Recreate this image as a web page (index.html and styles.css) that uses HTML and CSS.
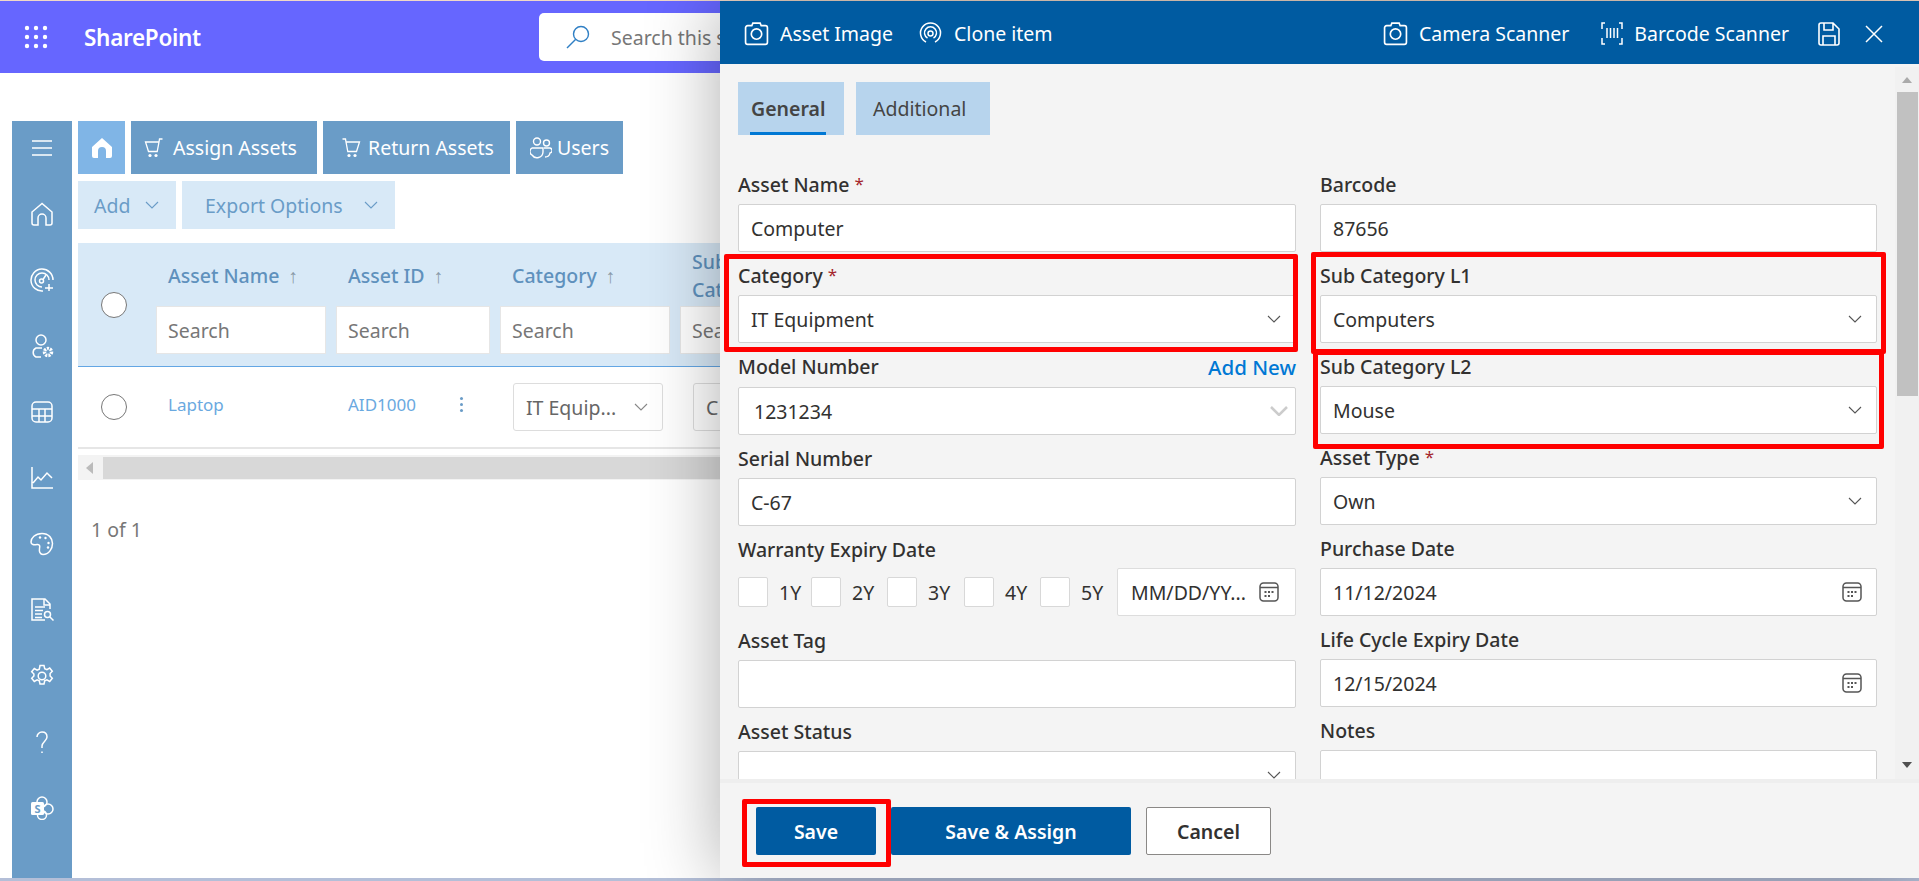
FILE: index.html
```html
<!DOCTYPE html>
<html lang="en">
<head>
  <meta charset="UTF-8">
  <title>SharePoint - Asset Management</title>
  <link rel="stylesheet" href="styles.css">
</head>
<body>
  <svg class="defs" width="0" height="0">
    <symbol id="chev" viewBox="0 0 14 8"><path d="M1 1l6 6 6-6" fill="none" stroke="currentColor" stroke-width="1.1"/></symbol>
    <symbol id="cal" viewBox="0 0 20 20">
      <rect x="1" y="1" width="18" height="18" rx="3.5" fill="none" stroke="currentColor" stroke-width="1.5"/>
      <path d="M1 5.5h18" stroke="currentColor" stroke-width="1.5"/>
      <path d="M5.5 9h2v2h-2zM9 9h2v2H9zM12.5 9h2v2h-2zM5.5 13h2v2h-2zM9 13h2v2H9z" fill="currentColor"/>
    </symbol>
    <symbol id="cam" viewBox="0 0 24 24">
      <path d="M3.5 4.5h4l1-2.5h7l1 2.5h4a2 2 0 0 1 2 2v14a2 2 0 0 1-2 2h-17a2 2 0 0 1-2-2v-14a2 2 0 0 1 2-2z" fill="none" stroke="currentColor" stroke-width="1.6"/>
      <circle cx="12" cy="12.5" r="5" fill="none" stroke="currentColor" stroke-width="1.6"/>
    </symbol>
    <symbol id="cart" viewBox="0 0 20 20">
      <path d="M1.500 4h13.500l-1.800 9.500H4.500zM15 4l.5-3h3" fill="none" stroke="currentColor" stroke-width="1.300"/>
      <circle cx="6" cy="17.500" r="1.600" fill="currentColor"/><circle cx="12" cy="17.500" r="1.600" fill="currentColor"/>
    </symbol>
  </svg>

  <div class="top-line"></div>
  <header class="topbar">
    <svg class="waffle" width="24" height="24" viewBox="0 0 24 24" fill="#fff">
      <circle cx="3" cy="3" r="2.2"/><circle cx="12" cy="3" r="2.2"/><circle cx="21" cy="3" r="2.2"/>
      <circle cx="3" cy="12" r="2.2"/><circle cx="12" cy="12" r="2.2"/><circle cx="21" cy="12" r="2.2"/>
      <circle cx="3" cy="21" r="2.2"/><circle cx="12" cy="21" r="2.2"/><circle cx="21" cy="21" r="2.2"/>
    </svg>
    <span class="brand">SharePoint</span>
    <div class="site-search">
      <svg width="24" height="24" viewBox="0 0 24 24" fill="none" stroke="#2f7fc4" stroke-width="1.4"><circle cx="15" cy="9" r="7.5"/><path d="M9.5 14.5L1 23"/></svg>
      <span>Search this site</span>
    </div>
  </header>

  <div class="app">
    <nav class="sidebar">
      <svg viewBox="0 0 24 24"><path d="M2 5h20M2 12h20M2 19h20"/></svg>
      <svg viewBox="0 0 24 24"><path d="M12 1.5L2 10v11a2 2 0 0 0 2 2h4v-7a4 4 0 0 1 8 0v7h4a2 2 0 0 0 2-2V10z"/></svg>
      <svg viewBox="0 0 24 24"><path d="M13 23A11 11 0 1 1 23 12M12 19a7 7 0 1 1 7-7"/><circle cx="11.500" cy="13" r="2"/><path d="M13 11.500l3-4.500M15 20h8M19 16v7"/></svg>
      <svg viewBox="0 0 24 24"><circle cx="11" cy="6" r="5"/><path d="M11 23H6a5 5 0 0 1 0-9h6"/><circle cx="18" cy="18" r="3.500" stroke-width="3.500" stroke-dasharray="2 1"/></svg>
      <svg viewBox="0 0 24 24"><rect x="2" y="2" width="20" height="20" rx="4"/><path d="M2 9h20M2 16h20M9 9v13M15 9v13"/></svg>
      <svg viewBox="0 0 24 24"><path d="M2 1v21h21M3 17l5-6 3 3 6-7 5 5"/></svg>
      <svg viewBox="0 0 24 24"><path d="M12 1.500C5 1.500 1 6 1 10c0 3 3 3 6 2.500 3-.5 3 2 2.500 4-.5 3 .5 6 3.500 6 6 0 9.500-6 9.500-11S19 1.500 12 1.500z"/><g class="solid"><circle cx="10" cy="5.500" r="1.200"/><circle cx="15.500" cy="6" r="1.200"/><circle cx="18.500" cy="11" r="1.200"/><circle cx="18" cy="15.500" r="1.200"/></g></svg>
      <svg viewBox="0 0 24 24"><path d="M20 11V6l-5-5H2v21h13M14 1v6h6M5 9h10M5 12.500h8M5 16h7M5 19.500h7"/><circle cx="17.500" cy="16.500" r="3"/><path d="M20 19l3.500 3.500"/></svg>
      <svg viewBox="0 0 24 24"><circle cx="12" cy="12" r="3.800"/><path d="M10 1.500h4l.7 3.200 2.200 1 2.800-1.700 2.600 3.300-2.200 2.200v2.500l2.200 2.200-2.600 3.300-2.800-1.700-2.200 1-.7 3.200h-4l-.7-3.200-2.200-1-2.800 1.700-2.600-3.300 2.200-2.200V10L1.700 7.800l2.600-3.300 2.800 1.700 2.200-1z"/></svg>
      <svg viewBox="0 0 24 24"><path d="M7 7a5 5 0 0 1 5-5c3 0 5 2 5 5 0 4-5 5-5 9v2"/><path d="M12 21.500v1.500"/></svg>
      <svg viewBox="0 0 24 24"><circle cx="12" cy="6" r="5"/><circle cx="18" cy="13" r="5"/><circle cx="12" cy="19" r="4.500"/><rect class="solid" x="1" y="6" width="13" height="13" rx="1.500"/><text class="sp-s" x="7.500" y="16.500" text-anchor="middle">S</text></svg>
    </nav>

    <main class="main">
      <div class="tabs">
        <a class="tab tab-home"><svg width="20" height="20" viewBox="0 0 20 20" fill="#fff"><path d="M10 0L0 9v9a2 2 0 0 0 2 2h4v-7a4 4 0 0 1 8 0v7h4a2 2 0 0 0 2-2V9z"/></svg></a>
        <a class="tab tab-assign"><svg width="20" height="20"><use href="#cart"/></svg>Assign Assets</a>
        <a class="tab tab-return"><svg class="flip" width="20" height="20"><use href="#cart"/></svg>Return Assets</a>
        <a class="tab tab-users">
          <svg width="22" height="22" viewBox="0 0 22 22" fill="none" stroke="currentColor" stroke-width="1.400"><circle cx="7" cy="4.500" r="3.500"/><circle cx="16.500" cy="6" r="3"/><path d="M2 11h11v4a6 6 0 0 1-11 3 4 4 0 0 1 0-7zM14 11h5a2.500 2.500 0 0 1 1 5c-.5 3-3 4-5 4"/></svg>
          Users
        </a>
      </div>

      <div class="actions">
        <a class="action action-add">Add<svg width="14" height="8"><use href="#chev"/></svg></a>
        <a class="action action-export">Export Options<svg width="14" height="8"><use href="#chev"/></svg></a>
      </div>

      <div class="grid-head">
        <div class="cell-check"><span class="radio"></span></div>
        <div class="col col-1"><div class="col-title">Asset Name <i>↑</i></div><div class="col-search">Search</div></div>
        <div class="col col-2"><div class="col-title">Asset ID <i>↑</i></div><div class="col-search">Search</div></div>
        <div class="col col-3"><div class="col-title">Category <i>↑</i></div><div class="col-search">Search</div></div>
        <div class="col col-4"><div class="col-title">Sub<br>Cat</div><div class="col-search">Sea</div></div>
      </div>

      <div class="grid-row">
        <div class="cell-check"><span class="radio"></span></div>
        <div class="cell col-1 cell-link">Laptop</div>
        <div class="cell col-2 cell-link cell-id">AID1000<span class="dots"></span></div>
        <div class="cell col-3"><div class="cell-select">IT Equip...<svg width="14" height="8"><use href="#chev"/></svg></div></div>
        <div class="cell col-4"><div class="cell-select">C</div></div>
      </div>

      <div class="hscroll"><span class="hscroll-btn"></span><span class="hscroll-thumb"></span></div>
      <div class="pager">1 of 1</div>
    </main>
  </div>
  <div class="bottom-line"></div>

  <aside class="panel">
    <div class="panel-head">
      <a class="head-btn"><svg width="25" height="25"><use href="#cam"/></svg>Asset Image</a>
      <a class="head-btn">
        <svg width="25" height="25" viewBox="0 0 25 25" fill="none" stroke="currentColor" stroke-width="1.500"><circle cx="12.500" cy="12.500" r="2.500"/><path d="M8 21a10 10 0 1 1 9 0M9.500 17a6 6 0 1 1 6 0"/></svg>
        Clone item
      </a>
      <span class="head-space"></span>
      <a class="head-btn head-btn-camera"><svg width="25" height="25"><use href="#cam"/></svg>Camera Scanner</a>
      <a class="head-btn">
        <svg width="22" height="25" viewBox="0 0 22 25" fill="none" stroke="currentColor" stroke-width="1.500"><path d="M4 2H1v6M1 17v6h3M18 2h3v6M21 17v6h-3M6 7v10M9.500 7v10M13 7v10M16.500 7v10"/></svg>
        Barcode Scanner
      </a>
      <svg class="head-save" width="22" height="24" viewBox="0 0 22 24" fill="none" stroke="#fff" stroke-width="1.600"><path d="M1 3a2 2 0 0 1 2-2h12l6 6v14a2 2 0 0 1-2 2H3a2 2 0 0 1-2-2zM6 1v7h9V1M5 23v-9h12v9"/></svg>
      <svg class="head-close" width="18" height="18" viewBox="0 0 18 18" stroke="#fff" stroke-width="1.500"><path d="M1 1l16 16M17 1L1 17"/></svg>
    </div>

    <div class="panel-body">
      <div class="panel-scroll">
        <div class="form-tabs">
          <a class="form-tab form-tab-general">General</a>
          <a class="form-tab form-tab-additional">Additional</a>
        </div>
        <div class="form-cols">
          <div class="form-col">
            <div class="field"><label>Asset Name <b>*</b></label><div class="input">Computer</div></div>
            <div class="field"><label>Category <b>*</b></label><div class="input">IT Equipment<svg width="14" height="8"><use href="#chev"/></svg></div></div>
            <div class="field field-model"><label>Model Number<a class="add-new">Add New</a></label><div class="input input-model">1231234<svg class="chev-bold" width="18" height="10" viewBox="0 0 18 10"><path d="M1 1l8 8 8-8" fill="none" stroke="currentColor" stroke-width="2.500"/></svg></div></div>
            <div class="field"><label>Serial Number</label><div class="input">C-67</div></div>
            <div class="field">
              <label>Warranty Expiry Date</label>
              <div class="warranty">
                <span class="tick"></span><span class="tick-label">1Y</span>
                <span class="tick"></span><span class="tick-label">2Y</span>
                <span class="tick"></span><span class="tick-label">3Y</span>
                <span class="tick"></span><span class="tick-label">4Y</span>
                <span class="tick"></span><span class="tick-label">5Y</span>
                <div class="input input-date">MM/DD/YY...<svg width="20" height="20"><use href="#cal"/></svg></div>
              </div>
            </div>
            <div class="field"><label>Asset Tag</label><div class="input"></div></div>
            <div class="field"><label>Asset Status</label><div class="input"><svg width="14" height="8"><use href="#chev"/></svg></div></div>
          </div>
          <div class="form-col">
            <div class="field"><label>Barcode</label><div class="input">87656</div></div>
            <div class="field"><label>Sub Category L1</label><div class="input">Computers<svg width="14" height="8"><use href="#chev"/></svg></div></div>
            <div class="field"><label>Sub Category L2</label><div class="input">Mouse<svg width="14" height="8"><use href="#chev"/></svg></div></div>
            <div class="field"><label>Asset Type <b>*</b></label><div class="input">Own<svg width="14" height="8"><use href="#chev"/></svg></div></div>
            <div class="field"><label>Purchase Date</label><div class="input">11/12/2024<svg width="20" height="20"><use href="#cal"/></svg></div></div>
            <div class="field"><label>Life Cycle Expiry Date</label><div class="input">12/15/2024<svg width="20" height="20"><use href="#cal"/></svg></div></div>
            <div class="field"><label>Notes</label><div class="input"></div></div>
          </div>
        </div>
      </div>
      <div class="vscroll">
        <span class="arrow-up"></span>
        <span class="vscroll-thumb"></span>
        <span class="arrow-down"></span>
      </div>
    </div>

    <div class="panel-foot">
      <button class="btn btn-primary btn-save">Save</button>
      <button class="btn btn-primary btn-assign">Save &amp; Assign</button>
      <button class="btn btn-cancel">Cancel</button>
    </div>

    <!-- red highlight boxes from the annotated screenshot -->
    <span class="mark mark-category"></span>
    <span class="mark mark-l1"></span>
    <span class="mark mark-l2"></span>
    <span class="mark mark-save"></span>
  </aside>
</body>
</html>
```

FILE: styles.css
```css
* {
  box-sizing: border-box;
}
body {
  margin: 0;
  height: 881px;
  overflow: hidden;
  position: relative;
  background: #fff;
  font-family: 'Noto Sans', 'Open Sans', sans-serif;
  font-size: 19.5px;
  color: #323130;
  display: flex;
  flex-direction: column;
}
.defs {
  position: absolute;
}
.top-line {
  height: 1px;
  background: #f0d8c8;
}
.bottom-line {
  height: 3px;
  background: #b4bfd8;
}

/* Suite bar */
.topbar {
  height: 72px;
  background: #6666ff;
  display: flex;
  align-items: center;
  padding-left: 24px;
  flex-shrink: 0;
}
.brand {
  width: 117px;
  margin-left: 36px;
  color: #fff;
  font-size: 22.5px;
  font-weight: 600;
  letter-spacing: -0.3px;
  white-space: nowrap;
}
.site-search {
  margin-left: 338px;
  width: 500px;
  height: 48px;
  background: #fff;
  border-radius: 5px;
  display: flex;
  align-items: center;
  gap: 21px;
  padding-left: 27px;
  color: #777;
}

.app {
  flex: 1;
  display: flex;
  padding: 48px 0 0 12px;
  min-height: 0;
}
.sidebar {
  width: 60px;
  background: #6a9cc7;
  display: flex;
  flex-direction: column;
  align-items: center;
  gap: 42px;
  padding-top: 15px;
  flex-shrink: 0;
}
.sidebar svg {
  width: 24px;
  height: 24px;
  fill: none;
  stroke: #fff;
  stroke-width: 1.5;
  flex-shrink: 0;
}
.sidebar .solid {
  fill: #fff;
  stroke: none;
}
.sidebar .sp-s {
  fill: #6a9cc7;
  stroke: none;
  font-size: 11px;
  font-weight: 700;
  font-family: 'Noto Sans', sans-serif;
}

.main {
  flex: 1;
  padding-left: 6px;
  min-width: 0;
}
.tabs {
  display: flex;
  gap: 6px;
  height: 53px;
}
.tab {
  background: #6a9cc7;
  color: #fff;
  display: flex;
  align-items: center;
  gap: 9px;
  white-space: nowrap;
}
.tab-home {
  background: #80b5e6;
  width: 47px;
  justify-content: center;
}
.tab-assign {
  width: 186px;
  padding-left: 13px;
}
.tab-return {
  width: 187px;
  padding-left: 18px;
  gap: 7px;
}
.tab-users {
  width: 107px;
  padding-left: 14px;
  gap: 5px;
}
.flip {
  transform: scaleX(-1);
}
.actions {
  display: flex;
  gap: 6px;
  margin-top: 7px;
  height: 48px;
}
.action {
  background: #d8e9f7;
  color: #6a9cc7;
  display: flex;
  align-items: center;
}
.action-add {
  width: 98px;
  padding-left: 16px;
  gap: 15px;
}
.action-export {
  width: 213px;
  padding-left: 23px;
  gap: 21px;
}

.grid-head {
  margin-top: 14px;
  height: 124px;
  background: #d8e9f7;
  border-bottom: 1px solid #63a6e4;
  display: flex;
  color: #5f91bd;
  width: 1700px;
}
.cell-check {
  width: 78px;
  display: flex;
  align-items: center;
  padding-left: 23px;
  flex-shrink: 0;
}
.radio {
  width: 26px;
  height: 26px;
  border-radius: 50%;
  border: 1.5px solid #777;
  background: #fff;
}
.col {
  display: flex;
  flex-direction: column;
  justify-content: flex-end;
  padding-bottom: 12px;
}
.col-1 {
  width: 180px;
}
.col-2 {
  width: 164px;
}
.col-3 {
  width: 180px;
}
.col-4 {
  width: 180px;
}
.col-title {
  height: 56px;
  margin-bottom: 2px;
  padding-left: 12px;
  line-height: 28px;
  font-weight: 500;
  display: flex;
  align-items: center;
  white-space: pre;
}
.col-4 .col-title {
  display: block;
}
.col-title i {
  font-style: normal;
  font-weight: 400;
  color: #8a9aa8;
  margin-left: 4px;
}
.col-search {
  background: #fff;
  height: 48px;
  width: calc(100% - 10px);
  border: 1px solid #e6e6e6;
  padding-left: 11px;
  line-height: 48px;
  color: #777;
}
.grid-row {
  height: 82px;
  border-bottom: 2px solid #e6e6e6;
  display: flex;
  align-items: center;
  width: 1700px;
}
.cell-link {
  color: #6aa9e0;
  font-size: 17px;
  padding-left: 12px;
  margin-top: -6px;
}
.cell-id {
  display: flex;
  align-items: center;
}
/* the kebab is three dots */
.dots {
  width: 3px;
  height: 3px;
  margin-left: 44px;
  border-radius: 50%;
  background: #6a9cc7;
  box-shadow: 0 -6px 0 #6a9cc7, 0 6px 0 #6a9cc7;
}
.cell.col-3, .cell.col-4 {
  padding-left: 13px;
}
.cell-select {
  height: 48px;
  width: 150px;
  border: 1px solid #ddd;
  border-radius: 3px;
  display: flex;
  align-items: center;
  justify-content: space-between;
  padding: 0 14px 0 12px;
  color: #666;
  white-space: nowrap;
}
.cell-select svg {
  color: #888;
}
.hscroll {
  margin-top: 6px;
  height: 25px;
  display: flex;
  background: #f3f3f3;
  width: 1700px;
  align-items: center;
}
.hscroll-btn {
  width: 25px;
}
.hscroll-btn:before {
  content: "";
  display: block;
  margin-left: 8px;
  border-right: 7px solid #bbb;
  border-top: 6px solid transparent;
  border-bottom: 6px solid transparent;
  width: 0;
}
.hscroll-thumb {
  flex: 1;
  height: 22px;
  background: #d8d8d8;
}
.pager {
  margin-top: 36px;
  padding-left: 13px;
  color: #777;
}

/* Side panel */
.panel {
  position: absolute;
  top: 1px;
  left: 720px;
  right: 0;
  bottom: 3px;
  background: #f4f4f4;
  box-shadow: 0 0 70px rgba(0, 0, 0, 0.32);
  display: flex;
  flex-direction: column;
}
.panel-head {
  height: 63px;
  background: #005ba1;
  color: #fff;
  display: flex;
  align-items: center;
  padding: 2px 0 0 24px;
  flex-shrink: 0;
}
.head-btn {
  display: flex;
  align-items: center;
  gap: 11px;
  margin-right: 25px;
  white-space: nowrap;
}
.head-btn-camera {
  margin-right: 32px;
}
.head-space {
  flex: 1;
}
.head-save {
  margin-left: 4px;
}
.head-close {
  margin: 0 36px 0 25px;
}
.panel-body {
  margin-top: 3px;
  flex: 1;
  min-height: 0;
  display: flex;
}
.panel-scroll {
  flex: 1;
  padding: 15px 18px 0;
  overflow: hidden;
}
.form-tabs {
  display: flex;
  gap: 12px;
  height: 53px;
  margin-bottom: 26px;
}
.form-tab {
  background: #b7d4ed;
  display: flex;
  align-items: center;
  color: #444;
  position: relative;
}
.form-tab-general {
  width: 106px;
  padding-left: 13px;
  font-weight: 600;
}
.form-tab-general:after {
  content: "";
  position: absolute;
  left: 12px;
  right: 18px;
  bottom: 0;
  height: 3px;
  background: #0078d4;
}
.form-tab-additional {
  width: 134px;
  padding-left: 17px;
}
.form-cols {
  display: grid;
  grid-template-columns: 558px 557px;
  column-gap: 24px;
}
.field {
  height: 91px;
}
.field-model {
  height: 92px;
}
.field label {
  display: block;
  height: 43px;
  padding-top: 11px;
  line-height: 26px;
  font-weight: 500;
  position: relative;
}
.field label b {
  color: #a4262c;
  font-weight: 400;
  font-size: 17px;
  line-height: 1;
  position: relative;
  top: -2px;
}
.add-new {
  position: absolute;
  right: 0;
  color: #0078d4;
  font-size: 20.5px;
}
.field-model .input {
  margin-top: 1px;
}
.input {
  height: 48px;
  background: #fff;
  border: 1px solid #d2d2d2;
  border-radius: 2px;
  display: flex;
  align-items: center;
  justify-content: space-between;
  padding: 0 14px 0 12px;
  color: #323130;
}
.input svg {
  color: #555;
  margin-left: auto;
}
.input-model {
  padding-left: 15px;
}
.input .chev-bold {
  color: #ccc;
  margin-right: -7px;
}
.warranty {
  display: flex;
  align-items: center;
  height: 48px;
  margin-top: -1px;
}
.tick {
  width: 30px;
  height: 30px;
  background: #fff;
  border: 1px solid #d8d8d8;
  border-radius: 2px;
  flex-shrink: 0;
}
.tick-label {
  width: 46px;
  padding-left: 11px;
}
.tick-label:nth-child(2) {
  width: 43px;
}
.tick-label:nth-child(6), .tick-label:nth-child(10) {
  width: 47px;
}
.input-date {
  width: 179px;
  flex-shrink: 0;
  padding: 0 16px 0 13px;
  white-space: nowrap;
  border-color: #ddd;
}
.vscroll {
  width: 24px;
  background: #f1f1f1;
  position: relative;
  flex-shrink: 0;
}
.vscroll-thumb {
  position: absolute;
  top: 25px;
  left: 2px;
  right: 1px;
  height: 304px;
  background: #c1c1c1;
}
.arrow-up, .arrow-down {
  position: absolute;
  left: 7px;
  width: 0;
  border-left: 5px solid transparent;
  border-right: 5px solid transparent;
}
.arrow-up {
  top: 10px;
  border-bottom: 6px solid #aaa;
}
.arrow-down {
  bottom: 11px;
  border-top: 6px solid #505050;
}
.panel-foot {
  height: 99px;
  border-top: 4px solid #eee;
  flex-shrink: 0;
  display: flex;
  padding: 24px 0 0 36px;
  align-items: flex-start;
}
.btn {
  height: 48px;
  font-family: inherit;
  font-size: 19.5px;
  font-weight: 600;
  border-radius: 2px;
  border: 0;
}
.btn-primary {
  background: #005ba1;
  color: #fff;
}
.btn-save {
  width: 120px;
}
.btn-assign {
  width: 240px;
  margin-left: 15px;
}
.btn-cancel {
  width: 125px;
  margin-left: 15px;
  background: #fff;
  border: 1px solid #8a8886;
  color: #323130;
}

/* Red boxes sit over the form */
.mark {
  position: absolute;
  border: 5px solid #f00;
  border-radius: 2px;
}
.mark-category {
  left: 4px;
  top: 253px;
  width: 574px;
  height: 98px;
}
.mark-l1 {
  left: 591px;
  top: 251px;
  width: 575px;
  height: 102px;
}
.mark-l2 {
  left: 593px;
  top: 349px;
  width: 571px;
  height: 99px;
}
.mark-save {
  left: 22px;
  top: 798px;
  width: 149px;
  height: 68px;
}
```
